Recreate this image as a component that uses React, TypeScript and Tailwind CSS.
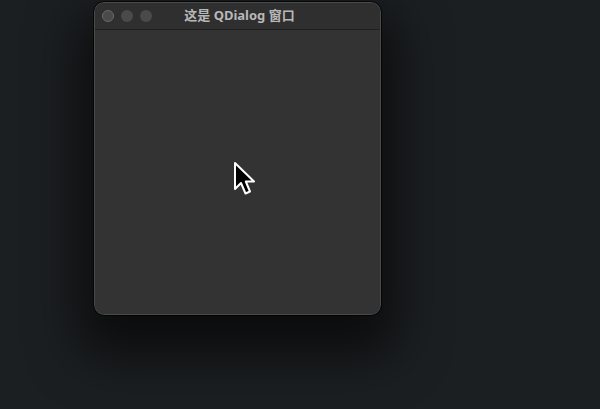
import React from 'react';

function Cursor() {
  return (
    <svg width="26" height="36" viewBox="0 0 26 36" className="absolute left-[233px] top-[161px]">
      <path
        d="M2 2 L2 28 L8 22 L12.5 32.5 L17 30.5 L12.8 20.5 L21 20.5 Z"
        fill="#000"
        stroke="#fff"
        strokeWidth="2"
        strokeLinejoin="round"
      />
    </svg>
  );
}

function TrafficLights() {
  return (
    <div className="flex items-center gap-[7px]">
      <span className="w-3 h-3 rounded-full bg-[#4a4a4a] border border-[#6a6a6a]" />
      <span className="w-3 h-3 rounded-full bg-[#4a4a4a]" />
      <span className="w-3 h-3 rounded-full bg-[#4a4a4a]" />
    </div>
  );
}

export default function App() {
  return (
    <div className="relative w-[600px] h-[409px] bg-[#1c1f22] overflow-hidden">
      <div className="pl-[94px] pt-[2px]">
        <div className="w-[287px] h-[313px] rounded-[10px] bg-[#323232] border border-[#4a4a4a] outline outline-1 outline-black/70 shadow-[0_26px_50px_16px_rgba(0,0,0,0.6)] flex flex-col overflow-hidden">
          <div className="relative h-[27px] flex items-center px-[7px] border-b border-[#1f1f1f] bg-[#2f2f2f]">
            <TrafficLights />
            <div
              className="absolute inset-0 flex items-center justify-center pl-[4px] text-[13px] font-bold text-[#b8b8b8]"
              style={{ fontFamily: '"Noto Sans", "Noto Sans CJK SC", sans-serif' }}
            >
              这是 QDialog 窗口
            </div>
          </div>
          <div className="flex-1 bg-[#333333]" />
        </div>
      </div>
      <Cursor />
    </div>
  );
}
